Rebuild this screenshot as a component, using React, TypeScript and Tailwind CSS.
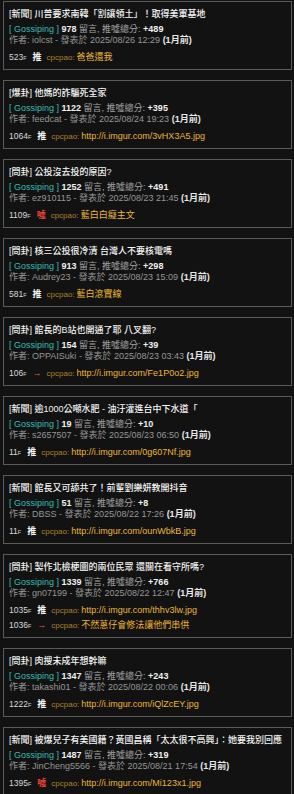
import React from "react";

type Comment = { floor: number; tag: "推" | "噓" | "→"; text: string };
type Post = {
  title: string;
  replies: number;
  score: string;
  author: string;
  date: string;
  comments: Comment[];
};

const posts: Post[] = [
  { title: "[新聞] 川普要求南韓「割讓領土」！取得美軍基地", replies: 978, score: "+489", author: "iolcst", date: "2025/08/26 12:29", comments: [{ floor: 523, tag: "推", text: "爸爸還我" }] },
  { title: "[爆卦] 他媽的詐騙死全家", replies: 1122, score: "+395", author: "feedcat", date: "2025/08/24 19:23", comments: [{ floor: 1064, tag: "推", text: "http://i.imgur.com/3vHX3A5.jpg" }] },
  { title: "[問卦] 公投沒去投的原因?", replies: 1252, score: "+491", author: "ez910115", date: "2025/08/23 21:45", comments: [{ floor: 1109, tag: "噓", text: "藍白白癡主文" }] },
  { title: "[問卦] 核三公投很冷清 台灣人不要核電嗎", replies: 913, score: "+298", author: "Audrey23", date: "2025/08/23 15:09", comments: [{ floor: 581, tag: "推", text: "藍白滾實線" }] },
  { title: "[問卦] 館長的B站也開通了耶 八叉翻?", replies: 154, score: "+39", author: "OPPAISuki", date: "2025/08/23 03:43", comments: [{ floor: 106, tag: "→", text: "http://i.imgur.com/Fe1P0o2.jpg" }] },
  { title: "[新聞] 逾1000公噸水肥 - 油汙灌進台中下水道「", replies: 19, score: "+10", author: "s2657507", date: "2025/08/23 06:50", comments: [{ floor: 11, tag: "推", text: "http://i.imgur.com/0g607Nf.jpg" }] },
  { title: "[新聞] 館長又可舔共了！前輩劉樂妍教開抖音", replies: 51, score: "+8", author: "DBSS", date: "2025/08/22 17:26", comments: [{ floor: 11, tag: "推", text: "http://i.imgur.com/ounWbkB.jpg" }] },
  { title: "[問卦] 製作北檢梗圖的兩位民眾 還關在看守所嗎?", replies: 1339, score: "+766", author: "gn07199", date: "2025/08/22 12:47", comments: [{ floor: 1035, tag: "推", text: "http://i.imgur.com/thhv3lw.jpg" }, { floor: 1036, tag: "→", text: "不然蔥仔會修法讓他們串供" }] },
  { title: "[問卦] 肉搜未成年想幹嘛", replies: 1347, score: "+243", author: "takashi01", date: "2025/08/22 00:06", comments: [{ floor: 1222, tag: "推", text: "http://i.imgur.com/iQlZcEY.jpg" }] },
  { title: "[新聞] 被爆兒子有美國籍？黃國昌稱「太太很不高興」：她要我別回應", replies: 1487, score: "+319", author: "JinCheng5566", date: "2025/08/21 17:54", comments: [{ floor: 1395, tag: "噓", text: "http://i.imgur.com/Mi123x1.jpg" }] },
];

function Tag({ tag }: { tag: Comment["tag"] }) {
  if (tag === "推") return <span className="ml-[6px] text-[9px] font-bold text-[#f4f4f4]">推</span>;
  if (tag === "噓") return <span className="ml-[6px] text-[9px] font-bold text-[#e8403a]">噓</span>;
  return <span className="ml-[6px] text-[9px] font-bold text-[#e8602c]">→</span>;
}

function Card({ p }: { p: Post }) {
  return (
    <div className="border border-[#5a5a5a] px-[5px] pt-[5px] pb-[4px]">
      <div className="text-[9px] leading-[14px] font-medium text-[#f4f4f4] whitespace-nowrap">{p.title}</div>
      <div className="mt-[3px] text-[9px] leading-[11px] whitespace-nowrap">
        <span className="text-[#35bcae]">[ Gossiping ]</span>{" "}
        <span className="font-bold text-[#f0f0f0]">{p.replies}</span>{" "}
        <span className="text-[#a2a2a2]">留言, 推噓總分: </span>
        <span className="font-bold text-[#f0f0f0]">{p.score}</span>
      </div>
      <div className="text-[9px] leading-[11px] whitespace-nowrap">
        <span className="text-[#969696]">作者: {p.author} - 發表於 {p.date} </span>
        <span className="font-bold text-[#e8e8e8]">(1月前)</span>
      </div>
      <div className="mt-[4px] flex flex-col">
        {p.comments.map((c, i) => (
          <div key={i} className="flex items-center h-[15px] whitespace-nowrap">
            <span className="text-[8.5px] text-[#d8d8d8]">{c.floor}</span>
            <span className="text-[5.5px] text-[#d8d8d8] self-center mt-[2px]">F</span>
            <Tag tag={c.tag} />
            <span className="ml-[5px] text-[8px] text-[#a9822a]">cpcpao:</span>
            <span className="ml-[2px] text-[9px] text-[#eab637]">{c.text}</span>
          </div>
        ))}
      </div>
    </div>
  );
}

export default function App() {
  return (
    <div
      className="min-h-screen bg-[#121212] pl-[3px] pr-[2px] pt-px flex flex-col gap-[10px] overflow-hidden"
      style={{ fontFamily: '"Liberation Sans", "Noto Sans CJK TC", sans-serif' }}
    >
      {posts.map((p, i) => (
        <Card key={i} p={p} />
      ))}
    </div>
  );
}
